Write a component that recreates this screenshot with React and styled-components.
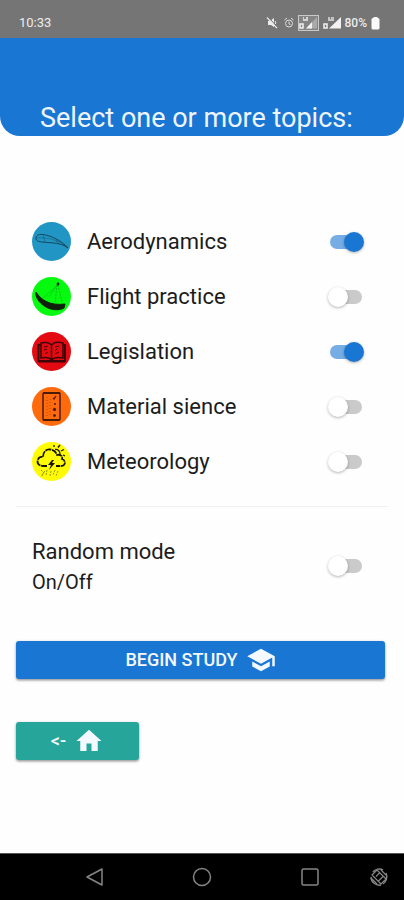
import React, { useState } from "react";
import styled, { createGlobalStyle } from "styled-components";
import { MdSchool, MdHome } from "react-icons/md";

const GlobalStyle = createGlobalStyle`
  *, *::before, *::after { box-sizing: border-box; }
  body {
    margin: 0;
    background: #fefefe;
    color: #1c1c1c;
    font-family: Roboto, "Liberation Sans", sans-serif;
  }
`;

const Screen = styled.div`
  display: flex;
  flex-direction: column;
  min-height: 100vh;
`;

const StatusBar = styled.div`
  display: flex;
  align-items: center;
  justify-content: space-between;
  height: 38px;
  padding: 8px 24px 0 19px;
  background: #757575;
  color: #ececec;
  font-size: 13px;
  line-height: 16px;
`;

const StatusIcons = styled.div`
  display: flex;
  align-items: center;
  gap: 4px;
  font-size: 12px;
  font-weight: 500;
`;

const Glyph = styled.svg`
  display: block;
  flex: none;
  width: ${(p) => p.$w}px;
  height: ${(p) => p.$h}px;
`;

const Header = styled.header`
  display: flex;
  align-items: flex-end;
  height: 98px;
  padding: 0 40px 2px;
  border-radius: 0 0 20px 20px;
  background: #1976d2;
`;

const Title = styled.h1`
  margin: 0;
  color: #eef5fd;
  font-size: 27px;
  font-weight: 400;
  line-height: 32px;
  white-space: nowrap;
`;

const Main = styled.main`
  flex: 1;
  padding: 78px 16px 24px;
`;

const TopicList = styled.ul`
  margin: 0;
  padding: 0 0 17px;
  border-bottom: 1px solid #f0f0f0;
  list-style: none;
`;

const Row = styled.label`
  display: flex;
  align-items: center;
  gap: 16px;
  min-height: 55px;
  padding: 0 24px 0 16px;
  cursor: pointer;
`;

const Avatar = styled.span`
  flex: none;
  width: 39px;
  height: 39px;
  border-radius: 50%;
  background: ${(p) => p.$color};
  overflow: hidden;
`;

const Labels = styled.span`
  display: flex;
  flex: 1;
  flex-direction: column;
`;

const Name = styled.span`
  font-size: 22px;
  line-height: 32px;
`;

const Caption = styled.span`
  font-size: 20px;
  line-height: 28px;
`;

const Toggle = styled.input`
  appearance: none;
  display: grid;
  flex: none;
  align-items: center;
  justify-items: ${(p) => (p.checked ? "end" : "start")};
  width: 36px;
  height: 20px;
  margin: 0;
  cursor: pointer;

  &::before {
    content: "";
    grid-area: 1 / 1;
    justify-self: center;
    width: 32px;
    height: 14px;
    border-radius: 7px;
    background: ${(p) => (p.checked ? "#75ade4" : "#cacaca")};
  }

  &::after {
    content: "";
    grid-area: 1 / 1;
    width: 20px;
    height: 20px;
    border-radius: 50%;
    background: ${(p) => (p.checked ? "#1976d2" : "#ffffff")};
    box-shadow: 0 1px 3px rgba(0, 0, 0, 0.3);
  }
`;

const RandomRow = styled(Row)`
  padding-top: 29px;
  padding-bottom: 28px;
`;

const Actions = styled.div`
  display: flex;
  flex-direction: column;
  align-items: flex-start;
  gap: 43px;
  padding: 17px 3px 0 0;
`;

const Button = styled.button`
  display: flex;
  align-items: center;
  justify-content: center;
  gap: 8px;
  width: ${(p) => (p.$wide ? "100%" : "33.3%")};
  height: 38px;
  padding: 0;
  border: 0;
  border-radius: 3px;
  background: ${(p) => (p.$wide ? "#1976d2" : "#26a69a")};
  box-shadow: 0 1px 3px rgba(0, 0, 0, 0.35), 0 2px 2px rgba(0, 0, 0, 0.12);
  color: #f4f9ff;
  font: 500 18px/24px Roboto, "Liberation Sans", sans-serif;
  cursor: pointer;
`;

const NavBar = styled.nav`
  display: grid;
  grid-template-columns: 41px repeat(3, 1fr) 30px;
  align-items: center;
  justify-items: center;
  height: 47px;
  padding-right: 10px;
  border-top: 1px solid #555;
  background: #000;
`;

const NavButton = styled.button`
  display: grid;
  grid-column: ${(p) => p.$col};
  place-items: center;
  width: 30px;
  height: 36px;
  padding: 0;
  border: 0;
  background: none;
  cursor: pointer;
`;

const WingArt = () => (
  <Glyph $w={39} $h={39} viewBox="0 0 39 39" fill="none" stroke="#17465e" strokeWidth="1">
    <path d="M36 26C30 19 20 14 11 12.500C6 12 3.500 14 4 17C5 20 10 20 16 20.500C24 21 31 22 36 26Z" />
    <path d="M5 16C15 15 27 18 36 26M11 13L13 20M24 17L26 22" strokeWidth="0.600" opacity="0.700" />
  </Glyph>
);

const FlightArt = () => (
  <Glyph $w={39} $h={39} viewBox="0 0 39 39">
    <path d="M4 15C9 23 18 29 33 27L32 31C28 33.500 20 33.500 14 30C7 26 3 20 4 15Z" fill="#10200b" stroke="#10200b" />
    <path d="M25 8L17 20M25 8L23 27M26 8L30 25M25 9L11 21" stroke="#0fae11" strokeWidth="0.700" fill="none" strokeDasharray="2 1" />
    <circle cx="26" cy="7" r="1.400" fill="#10200b" />
  </Glyph>
);

const BookArt = () => (
  <Glyph $w={39} $h={39} viewBox="0 0 39 39" fill="none" stroke="#3d0508" strokeWidth="1.500">
    <path d="M19.500 13C17 10 12 10 9 11V26C13 25 17 25 19.500 28C22 25 26 25 31 26V11C27 10 22 10 19.500 13ZM19.500 13V28" />
    <path d="M8.500 13H6.500V29H33V13H31M6.500 29.500H33" strokeWidth="2" />
    <path d="M12 15L16 14M12 18L15 17M13 22L16 20M23 15L27 14M23 19L26 16M23 22L27 20" strokeWidth="1" />
  </Glyph>
);

const ChecklistArt = () => (
  <Glyph $w={39} $h={39} viewBox="0 0 39 39" fill="none" stroke="#471d08">
    <rect x="11" y="6" width="17" height="27" rx="1" strokeWidth="1.500" />
    <path d="M11 33H28M11 6H28" strokeWidth="2" />
    <path d="M15 10V30M18 12V29" strokeDasharray="1 2" strokeWidth="1" opacity="0.400" />
    <path d="M21 11L22 12L24 9M22 17H24" strokeWidth="1.300" />
    <circle cx="22.500" cy="22.500" r="1.200" fill="#471d08" />
    <circle cx="22.500" cy="28.500" r="1" fill="#471d08" />
  </Glyph>
);

const StormArt = () => (
  <Glyph $w={39} $h={39} viewBox="0 0 39 39" fill="none" stroke="#151500" strokeWidth="1.800">
    <path d="M15 24H11C7 24 4.500 21 6 17.500C7 15 9 14.500 11 15C11 10 14 7 18 7.500C22 8 24 10 25 13C29 12 31 15 30 17C34 18 34 24 29 24H24" strokeDasharray="6 0.700" />
    <path d="M22 5V3M26 5.500L28 3M29 9L32 7.500M31 13L33 14M23 7.500C26 7 28 9 28 12" strokeWidth="1.300" />
    <path d="M20 18L16 23H19L17 28L23 21H20L22 18Z" fill="#151500" stroke="none" />
    <path d="M9 28L12 31L9 35M15 28L14 34M19 29L18 34M23 28L21 33M26 29L24 34M10 33L13 29" stroke="#8f8f0b" strokeWidth="0.900" strokeDasharray="2 1" />
  </Glyph>
);

const MutedIcon = () => (
  <Glyph $w={15} $h={12} viewBox="-2 0 15 12" fill="#ececec">
    <path d="M1 4H3L7 1V10L4 8H1Z" />
    <path d="M0 0.500L10 11" stroke="#ececec" strokeWidth="1.300" fill="none" />
    <path d="M8 4L9 6L8 7" stroke="#ececec" fill="none" />
    <path d="M1 0L11 10.500" stroke="#757575" fill="none" />
  </Glyph>
);

const AlarmIcon = () => (
  <Glyph $w={10} $h={12} viewBox="0 0 10 12" fill="none" stroke="#dcdcdc">
    <circle cx="5" cy="6.500" r="3.500" />
    <path d="M0.500 3L3 1M9.500 3L7 1M5 4.500V7L6.500 7.500" />
  </Glyph>
);

const BoxedSignalIcon = () => (
  <Glyph $w={21} $h={16} viewBox="0 0 21 16">
    <rect x="0.500" y="0.500" width="20" height="15" fill="#858585" stroke="#c9c9c9" />
    <path d="M8 13.500L19 2V13.500Z" fill="#aaa" />
    <path d="M8 13.500L14 7V13.500Z" fill="#f2f2f2" />
    <path d="M5 3H6M8 3H10M5 5H10" stroke="#ececec" strokeWidth="1.500" />
    <rect x="2" y="9" width="3" height="4" fill="none" stroke="#f2f2f2" strokeWidth="1.500" />
  </Glyph>
);

const SignalIcon = () => (
  <Glyph $w={18} $h={14} viewBox="0 0 18 14">
    <path d="M6 12.500L18 1V12.500Z" fill="#f2f2f2" />
    <path d="M5 2H7M8 2H11M5 4H11" stroke="#dedede" strokeWidth="1.500" />
    <rect x="1" y="8" width="3" height="4" fill="none" stroke="#f2f2f2" strokeWidth="1.500" />
  </Glyph>
);

const BatteryIcon = () => (
  <Glyph $w={9} $h={13} viewBox="0 0 9 13" fill="#fafafa">
    <rect x="0.500" y="1" width="8" height="11.500" rx="1.500" />
    <rect x="2.500" y="0" width="4" height="3" rx="0.500" />
  </Glyph>
);

const NavGlyph = ({ children }) => (
  <Glyph $w={20} $h={20} viewBox="0 0 20 20" fill="none" stroke="#858585" strokeWidth="1.500" strokeLinejoin="round">
    {children}
  </Glyph>
);

const TOPICS = [
  { id: "aero", name: "Aerodynamics", color: "#2196c4", Art: WingArt },
  { id: "flight", name: "Flight practice", color: "#05fa10", Art: FlightArt },
  { id: "law", name: "Legislation", color: "#e30b11", Art: BookArt },
  { id: "material", name: "Material sience", color: "#ff6a0d", Art: ChecklistArt },
  { id: "meteo", name: "Meteorology", color: "#fffb05", Art: StormArt },
];

export default function App() {
  const [selected, setSelected] = useState({ aero: true, law: true });
  const flip = (id) => setSelected((s) => ({ ...s, [id]: !s[id] }));

  return (
    <Screen>
      <GlobalStyle />
      <StatusBar>
        <span>10:33</span>
        <StatusIcons>
          <MutedIcon />
          <AlarmIcon />
          <BoxedSignalIcon />
          <SignalIcon />
          <span>80%</span>
          <BatteryIcon />
        </StatusIcons>
      </StatusBar>
      <Header>
        <Title>Select one or more topics:</Title>
      </Header>
      <Main>
        <TopicList>
          {TOPICS.map(({ id, name, color, Art }) => (
            <li key={id}>
              <Row htmlFor={id}>
                <Avatar $color={color}>
                  <Art />
                </Avatar>
                <Labels>
                  <Name>{name}</Name>
                </Labels>
                <Toggle id={id} type="checkbox" role="switch" checked={!!selected[id]} onChange={() => flip(id)} />
              </Row>
            </li>
          ))}
        </TopicList>
        <RandomRow htmlFor="random">
          <Labels>
            <Name>Random mode</Name>
            <Caption>On/Off</Caption>
          </Labels>
          <Toggle id="random" type="checkbox" role="switch" checked={!!selected.random} onChange={() => flip("random")} />
        </RandomRow>
        <Actions>
          <Button type="button" $wide>
            BEGIN STUDY
            <MdSchool size={30} />
          </Button>
          <Button type="button">
            &lt;-
            <MdHome size={30} />
          </Button>
        </Actions>
      </Main>
      <NavBar>
        <NavButton type="button" aria-label="Back" $col={2}>
          <NavGlyph>
            <path d="M17 2V18L2 10Z" />
          </NavGlyph>
        </NavButton>
        <NavButton type="button" aria-label="Home" $col={3}>
          <NavGlyph>
            <circle cx="10" cy="10" r="8.500" />
          </NavGlyph>
        </NavButton>
        <NavButton type="button" aria-label="Recent apps" $col={4}>
          <NavGlyph>
            <rect x="2" y="2" width="16" height="16" rx="1.500" />
          </NavGlyph>
        </NavButton>
        <NavButton type="button" aria-label="Rotate screen" $col={5}>
          <NavGlyph>
            <path d="M4 5C6 2 11 1 14 3M17 6C19 10 17 15 14 17M12 18C7 19 2 15 2 10" />
            <path d="M3 8L8 3L17 12L12 17ZM7 9.500L10.500 6M9.500 14L14 9.500M3 12L8 17M12 3L17 8" strokeWidth="1.200" />
          </NavGlyph>
        </NavButton>
      </NavBar>
    </Screen>
  );
}
